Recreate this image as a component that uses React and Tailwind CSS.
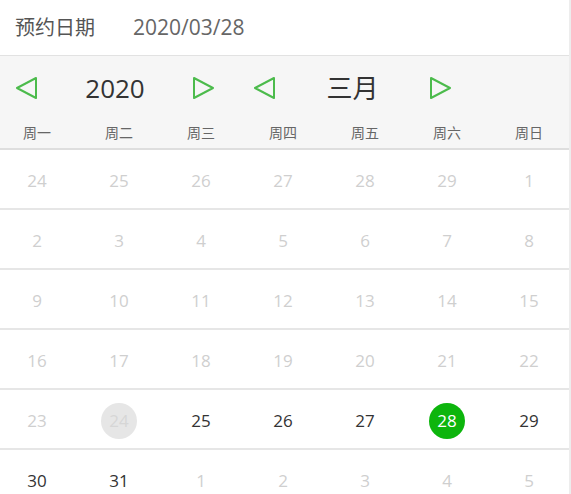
import React from "react";

const weekNames = ["周一", "周二", "周三", "周四", "周五", "周六", "周日"];

// each day: [label, state]  state: "off" greyed, "on" selectable, "today" grey circle, "sel" picked
const rows = [
  [["24", "off"], ["25", "off"], ["26", "off"], ["27", "off"], ["28", "off"], ["29", "off"], ["1", "off"]],
  [["2", "off"], ["3", "off"], ["4", "off"], ["5", "off"], ["6", "off"], ["7", "off"], ["8", "off"]],
  [["9", "off"], ["10", "off"], ["11", "off"], ["12", "off"], ["13", "off"], ["14", "off"], ["15", "off"]],
  [["16", "off"], ["17", "off"], ["18", "off"], ["19", "off"], ["20", "off"], ["21", "off"], ["22", "off"]],
  [["23", "off"], ["24", "today"], ["25", "on"], ["26", "on"], ["27", "on"], ["28", "sel"], ["29", "on"]],
  [["30", "on"], ["31", "on"], ["1", "off"], ["2", "off"], ["3", "off"], ["4", "off"], ["5", "off"]],
];

function Arrow({ dir }) {
  return (
    <svg width="23" height="24" viewBox="0 0 23 24" className="shrink-0">
      {dir === "left" ? (
        <path d="M21 2 L2 12 L21 22 Z" fill="none" stroke="#4cbb4c" strokeWidth="2" strokeLinejoin="round" />
      ) : (
        <path d="M2 2 L21 12 L2 22 Z" fill="none" stroke="#4cbb4c" strokeWidth="2" strokeLinejoin="round" />
      )}
    </svg>
  );
}

function Day({ label, state }) {
  if (state === "sel") {
    return (
      <div className="w-9 h-9 rounded-full bg-[#0db50d] text-white flex items-center justify-center">{label}</div>
    );
  }
  if (state === "today") {
    return (
      <div className="w-9 h-9 rounded-full bg-[#e6e6e6] text-[#d6d6d6] flex items-center justify-center">{label}</div>
    );
  }
  return <span className={state === "on" ? "text-[#333]" : "text-[#cfcfcf]"}>{label}</span>;
}

export default function App() {
  return (
    <div
      className="w-[571px] h-[494px] overflow-hidden bg-white border-r-2 border-[#ededed]"
      style={{ fontFamily: '"Open Sans", "Noto Sans CJK SC", sans-serif' }}
    >
      <div className="h-[56px] flex items-center px-[15px] border-b border-[#e2e2e2] text-[20px]">
        <span className="text-[#555]">预约日期</span>
        <span className="ml-[38px] text-[21px] text-[#666]">2020/03/28</span>
      </div>

      <div className="bg-[#f6f6f6] border-b-2 border-[#dedede]">
        <div className="h-[60px] pt-[4px] flex items-center pl-[15px]">
          <Arrow dir="left" />
          <div className="w-[154px] text-center text-[26px] text-[#333]">2020</div>
          <Arrow dir="right" />
          <div className="w-[38px]" />
          <Arrow dir="left" />
          <div className="w-[153px] text-center text-[26px] text-[#333]">三月</div>
          <Arrow dir="right" />
        </div>
        <div className="grid grid-cols-[repeat(7,82px)] -ml-[4px] h-[32px] pt-[1px] items-center text-[14px] text-[#666]">
          {weekNames.map((w) => (
            <div key={w} className="text-center">{w}</div>
          ))}
        </div>
      </div>

      {rows.map((row, i) => (
        <div key={i} className="h-[60px] border-b-2 border-[#e6e6e6] text-[17px]">
          <div className="grid grid-cols-[repeat(7,82px)] -ml-[4px] h-full pt-[3px]">
            {row.map(([label, state], j) => (
              <div key={j} className="flex items-center justify-center">
                <Day label={label} state={state} />
              </div>
            ))}
          </div>
        </div>
      ))}
    </div>
  );
}
